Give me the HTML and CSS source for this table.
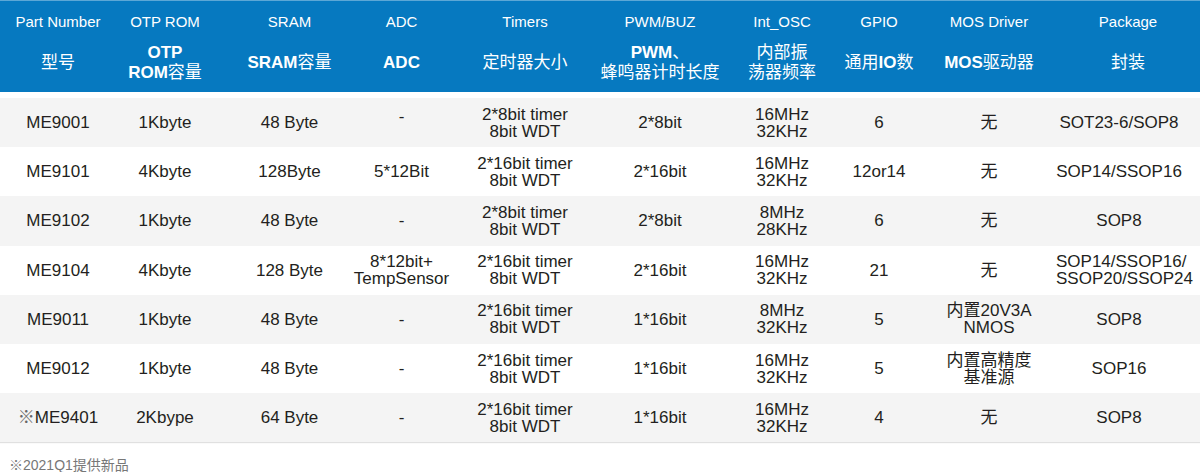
FILE: index.html
```html
<!DOCTYPE html>
<html lang="zh-CN">
<head>
<meta charset="utf-8">
<title>ME MCU</title>
<link rel="stylesheet" href="styles.css">
</head>
<body>
<div class="table">
  <div class="head">
    <div class="grid en">
      <div>Part Number</div>
      <div>OTP ROM</div>
      <div class="c3">SRAM</div>
      <div>ADC</div>
      <div>Timers</div>
      <div>PWM/BUZ</div>
      <div>Int_OSC</div>
      <div>GPIO</div>
      <div>MOS Driver</div>
      <div>Package</div>
    </div>
    <div class="grid cn">
      <div>型号</div>
      <div><b>OTP</b><br><b>ROM</b>容量</div>
      <div class="c3"><b>SRAM</b>容量</div>
      <div><b>ADC</b></div>
      <div>定时器大小</div>
      <div><b>PWM</b>、<br>蜂鸣器计时长度</div>
      <div>内部振<br>荡器频率</div>
      <div>通用<b>IO</b>数</div>
      <div><b>MOS</b>驱动器</div>
      <div>封装</div>
    </div>
  </div>
  <div class="rows">
    <div class="grid row">
      <div>ME9001</div>
      <div>1Kbyte</div>
      <div class="c3">48 Byte</div>
      <div class="up">-</div>
      <div>2*8bit timer<br>8bit WDT</div>
      <div>2*8bit</div>
      <div>16MHz<br>32KHz</div>
      <div>6</div>
      <div>无</div>
      <div class="pk">SOT23-6/SOP8</div>
    </div>
    <div class="grid row">
      <div>ME9101</div>
      <div>4Kbyte</div>
      <div class="c3">128Byte</div>
      <div>5*12Bit</div>
      <div>2*16bit timer<br>8bit WDT</div>
      <div>2*16bit</div>
      <div>16MHz<br>32KHz</div>
      <div>12or14</div>
      <div>无</div>
      <div class="pk">SOP14/SSOP16</div>
    </div>
    <div class="grid row">
      <div>ME9102</div>
      <div>1Kbyte</div>
      <div class="c3">48 Byte</div>
      <div>-</div>
      <div>2*8bit timer<br>8bit WDT</div>
      <div>2*8bit</div>
      <div>8MHz<br>28KHz</div>
      <div>6</div>
      <div>无</div>
      <div class="pk">SOP8</div>
    </div>
    <div class="grid row">
      <div>ME9104</div>
      <div>4Kbyte</div>
      <div class="c3">128 Byte</div>
      <div>8*12bit+<br>TempSensor</div>
      <div>2*16bit timer<br>8bit WDT</div>
      <div>2*16bit</div>
      <div>16MHz<br>32KHz</div>
      <div>21</div>
      <div>无</div>
      <div class="pk">SOP14/SSOP16/<br>SSOP20/SSOP24</div>
    </div>
    <div class="grid row">
      <div>ME9011</div>
      <div>1Kbyte</div>
      <div class="c3">48 Byte</div>
      <div>-</div>
      <div>2*16bit timer<br>8bit WDT</div>
      <div>1*16bit</div>
      <div>8MHz<br>32KHz</div>
      <div>5</div>
      <div>内置20V3A<br>NMOS</div>
      <div class="pk">SOP8</div>
    </div>
    <div class="grid row">
      <div>ME9012</div>
      <div>1Kbyte</div>
      <div class="c3">48 Byte</div>
      <div>-</div>
      <div>2*16bit timer<br>8bit WDT</div>
      <div>1*16bit</div>
      <div>16MHz<br>32KHz</div>
      <div>5</div>
      <div>内置高精度<br>基准源</div>
      <div class="pk">SOP16</div>
    </div>
    <div class="grid row">
      <div><span class="mark">※</span>ME9401</div>
      <div>2Kbype</div>
      <div class="c3">64 Byte</div>
      <div>-</div>
      <div>2*16bit timer<br>8bit WDT</div>
      <div>1*16bit</div>
      <div>16MHz<br>32KHz</div>
      <div>4</div>
      <div>无</div>
      <div class="pk">SOP8</div>
    </div>
  </div>
  <p class="note">※2021Q1提供新品</p>
</div>
</body>
</html>
```

FILE: styles.css
```css
html, body {
  margin: 0;
  padding: 0;
  background: #ffffff;
}

body {
  font-family: "Liberation Sans", Arial, "Noto Sans CJK SC", sans-serif;
  color: #231f20;
}

.grid {
  display: grid;
  grid-template-columns: 116px 98px 131px 113px 134px 136px 108px 86px 134px 144px;
  align-items: center;
}

.grid > div {
  text-align: center;
  white-space: nowrap;
}

.grid > .c3 {
  padding-left: 20px;
}

.head {
  background: #0679c0;
  color: #ffffff;
  padding: 2px 0 8px;
  box-shadow: inset 0 1px 0 rgba(255, 255, 255, 0.35);
}

.en {
  height: 40px;
  font-size: 15px;
  line-height: 18px;
}

.cn {
  height: 42px;
  font-size: 17px;
  line-height: 20px;
}

.cn b {
  font-weight: bold;
}

.rows {
  margin-top: 6px;
  box-shadow: 0 1px 1px rgba(0, 0, 0, 0.12);
}

.row {
  height: 49.2px;
  font-size: 17px;
  line-height: 17px;
}

.row:nth-child(odd) {
  background: #f4f4f4;
}

.row > .pk {
  padding-right: 18px;
}

.row > .up {
  padding-bottom: 12px;
}

.mark {
  color: #666666;
}

.note {
  margin: 15px 0 0;
  padding-left: 9px;
  font-size: 14px;
  line-height: 16px;
  color: #777777;
}
```
